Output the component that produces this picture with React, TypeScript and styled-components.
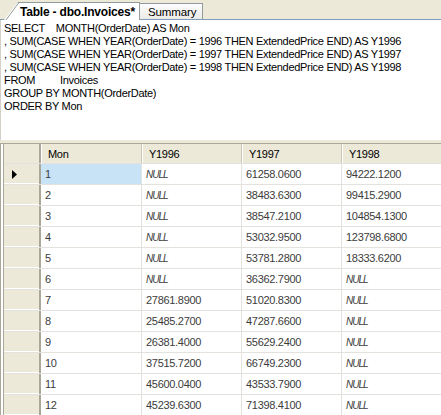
import React from "react";
import styled, { createGlobalStyle } from "styled-components";

const Global = createGlobalStyle`
  *, *::before, *::after { box-sizing: border-box; }
  html, body { margin: 0; padding: 0; background: #ffffff; }
  body { font-family: "Liberation Sans", Arial, sans-serif; }
`;

const Frame = styled.div`
  width: 441px;
  height: 415px;
  display: flex;
  flex-direction: column;
  overflow: hidden;
  background: #ffffff;
`;

const TabStrip = styled.div`
  height: 20px;
  background: #ece9d8;
  border-bottom: 1px solid #7f9db9;
  display: flex;
  align-items: flex-end;
  padding-left: 4px;
  flex-shrink: 0;
`;

const ActiveTab = styled.div`
  position: relative;
  height: 18px;
  margin-bottom: -1px;
  display: flex;
  align-items: center;
  padding: 0 4px 0 16px;
  background: #ffffff;
  font-weight: bold;
  font-size: 12px;
  letter-spacing: -0.2px;
  color: #000;
  border-top: 1px solid #919b9c;
  border-right: 1px solid #919b9c;
  clip-path: polygon(14px 0, 100% 0, 100% 100%, 0 100%);
  z-index: 1;
`;

const Slant = styled.svg`
  position: absolute;
  left: 0;
  top: -1px;
`;

const Tab = styled.div`
  height: 16px;
  display: flex;
  align-items: center;
  padding: 0 6px 0 8px;
  background: linear-gradient(#fcfcfe, #ecebe6);
  border: 1px solid #919b9c;
  border-bottom: none;
  border-left: none;
  font-size: 11.5px;
  letter-spacing: -0.1px;
  color: #000;
`;

const SqlPane = styled.div`
  height: 120px;
  padding: 2px 0 0 3px;
  border-left: 1px solid #d4d0c8;
  font-size: 11px;
  letter-spacing: -0.3px;
  line-height: 13px;
  color: #000;
  white-space: pre;
  flex-shrink: 0;
`;

const Splitter = styled.div`
  height: 4px;
  background: #ece9d8;
  border-bottom: 1px solid #aca899;
  flex-shrink: 0;
`;

const GridWrap = styled.div`
  flex: 1;
  display: flex;
  border-left: 4px double #aca899;
`;

const Grid = styled.div`
  display: grid;
  grid-template-columns: 37px 101px 100px 100px 100px;
  grid-template-rows: 19px;
  grid-auto-rows: 20px;
  row-gap: 1px;
  background: #e3e2dc;
  align-content: start;
  font-size: 11px;
  letter-spacing: -0.3px;
  color: #3c3c3c;
`;

const Corner = styled.div`
  background: #ece9d8;
  border-right: 2px solid #aca899;
`;

const HeadCell = styled.div`
  background: #ece9d8;
  display: flex;
  align-items: center;
  padding-left: 6px;
  border-left: 1px solid #fff;
  border-right: 1px solid #cbc7b8;
  color: #000;
`;

const RowHead = styled.div`
  background: #ece9d8;
  border-right: 2px solid #aca899;
  display: flex;
  align-items: center;
  padding-left: 8px;
  box-shadow: inset 0 -1px 0 #fff;
`;

const Cell = styled.div<{ $sel?: boolean }>`
  background: ${(p) => (p.$sel ? "#c9e3f6" : "#ffffff")};
  display: flex;
  align-items: center;
  padding-left: 4px;
  border-right: 1px solid #e3e2dc;
`;

const Null = styled.span`
  font-style: italic;
  letter-spacing: -1px;
  font-size: 10px;
`;

const sql = [
  "SELECT    MONTH(OrderDate) AS Mon",
  ", SUM(CASE WHEN YEAR(OrderDate) = 1996 THEN ExtendedPrice END) AS Y1996",
  ", SUM(CASE WHEN YEAR(OrderDate) = 1997 THEN ExtendedPrice END) AS Y1997",
  ", SUM(CASE WHEN YEAR(OrderDate) = 1998 THEN ExtendedPrice END) AS Y1998",
  "FROM         Invoices",
  "GROUP BY MONTH(OrderDate)",
  "ORDER BY Mon",
];

const rows: [string, string | null, string, string | null][] = [
  ["1", null, "61258.0600", "94222.1200"],
  ["2", null, "38483.6300", "99415.2900"],
  ["3", null, "38547.2100", "104854.1300"],
  ["4", null, "53032.9500", "123798.6800"],
  ["5", null, "53781.2800", "18333.6200"],
  ["6", null, "36362.7900", null],
  ["7", "27861.8900", "51020.8300", null],
  ["8", "25485.2700", "47287.6600", null],
  ["9", "26381.4000", "55629.2400", null],
  ["10", "37515.7200", "66749.2300", null],
  ["11", "45600.0400", "43533.7900", null],
  ["12", "45239.6300", "71398.4100", null],
];

const Val = ({ v }: { v: string | null }) => (v === null ? <Null>NULL</Null> : <>{v}</>);

const Arrow = () => (
  <svg width="6" height="9" viewBox="0 0 6 9">
    <path d="M0 0 L5 4.5 L0 9 Z" fill="#000" />
  </svg>
);

export default function App() {
  return (
    <Frame>
      <Global />
      <TabStrip>
        <ActiveTab>
          <Slant width="15" height="20" viewBox="0 0 15 20">
            <path d="M0.5 20 L14.5 1" stroke="#919b9c" strokeWidth="1" fill="none" />
          </Slant>
          Table - dbo.Invoices*
        </ActiveTab>
        <Tab>Summary</Tab>
      </TabStrip>
      <SqlPane>{sql.join("\n")}</SqlPane>
      <Splitter />
      <GridWrap>
        <Grid>
          <Corner />
          <HeadCell>Mon</HeadCell>
          <HeadCell>Y1996</HeadCell>
          <HeadCell>Y1997</HeadCell>
          <HeadCell>Y1998</HeadCell>
          {rows.map((r, i) => (
            <React.Fragment key={i}>
              <RowHead>{i === 0 ? <Arrow /> : null}</RowHead>
              <Cell $sel={i === 0}>{r[0]}</Cell>
              <Cell>
                <Val v={r[1]} />
              </Cell>
              <Cell>{r[2]}</Cell>
              <Cell>
                <Val v={r[3]} />
              </Cell>
            </React.Fragment>
          ))}
        </Grid>
      </GridWrap>
    </Frame>
  );
}
